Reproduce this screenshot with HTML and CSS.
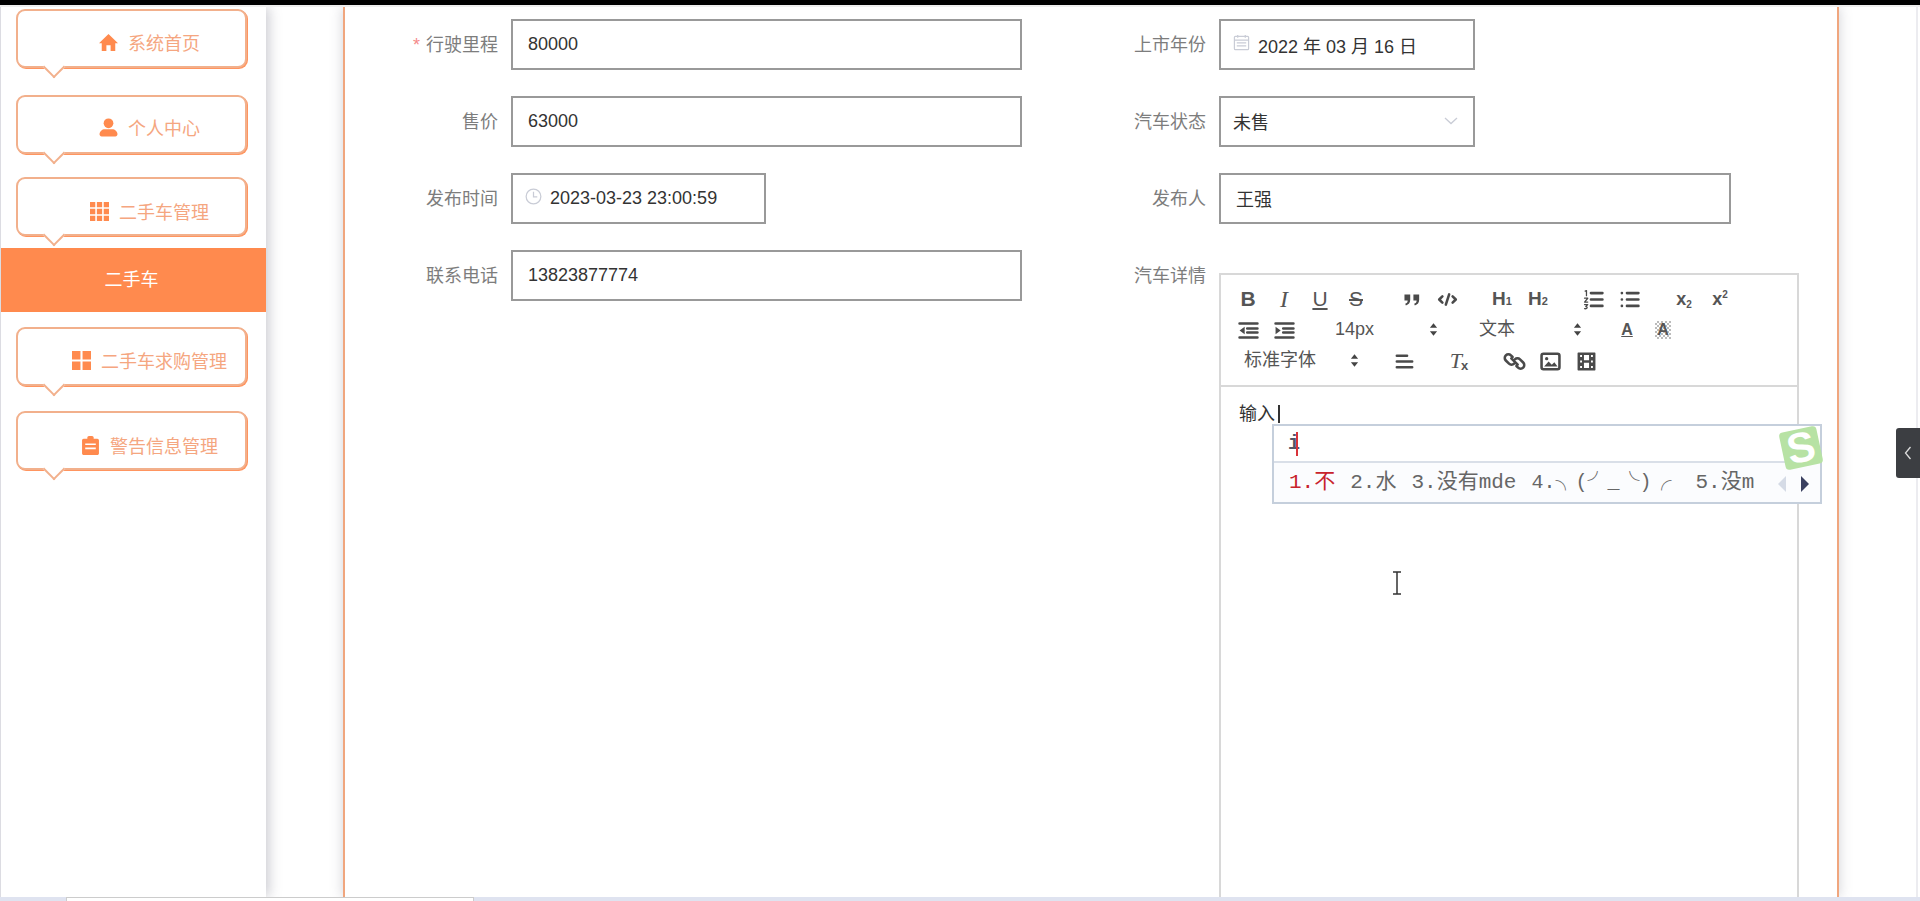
FILE: index.html
```html
<!DOCTYPE html>
<html lang="zh-CN">
<head>
<meta charset="UTF-8">
<meta name="viewport" content="width=device-width, initial-scale=1.0">
<title>二手车</title>
<link rel="stylesheet" href="styles.css">
</head>
<body>
<div class="topbar"></div>
<div class="page">
    <div class="sidebar">
        <a class="nav-card nav-home">
            <svg class="nav-icon" viewBox="0 0 18 18"><path d="M9 1 18 9.6h-2.6V17H11v-5.4H7V17H2.6V9.6H0z"/></svg>
            <span>系统首页</span>
        </a>
        <a class="nav-card nav-user">
            <svg class="nav-icon" viewBox="0 0 18 18"><circle cx="9" cy="5" r="4.6"/><path d="M0.5 15.5C0.5 12.5 3 10.6 5.5 10.6h7c2.5 0 5 1.9 5 4.9 0 1.2-.8 2-2 2h-13c-1.2 0-2-.8-2-2z"/></svg>
            <span>个人中心</span>
        </a>
        <a class="nav-card nav-cars">
            <svg class="nav-icon" viewBox="0 0 18 18"><path d="M0 0h5v5H0zM6.5 0h5v5h-5zM13 0h5v5h-5zM0 6.5h5v5H0zM6.5 6.5h5v5h-5zM13 6.5h5v5h-5zM0 13h5v5H0zM6.5 13h5v5h-5zM13 13h5v5h-5z"/></svg>
            <span>二手车管理</span>
        </a>
        <a class="nav-active">二手车</a>
        <a class="nav-card nav-wanted">
            <svg class="nav-icon" viewBox="0 0 18 18"><path d="M0 0h8v8H0zM10 0h8v8h-8zM0 10h8v8H0zM10 10h8v8h-8z"/></svg>
            <span>二手车求购管理</span>
        </a>
        <a class="nav-card nav-alert">
            <svg class="nav-icon" viewBox="0 0 18 18"><path fill-rule="evenodd" d="M2.5 2.5H6V1.5C6 .7 6.7 0 7.5 0h3c.8 0 1.5.7 1.5 1.5v1h3.5c.8 0 1.5.7 1.5 1.5v12.500c0 .8-.7 1.500-1.500 1.500h-13C1.700 18 1 17.300 1 16.500V4c0-.8.700-1.500 1.500-1.500zM4 7v1.600h10V7zM4 11v1.600h10V11z"/></svg>
            <span>警告信息管理</span>
        </a>
    </div>

    <div class="main">
        <div class="panel">
            <div class="form-col form-col-l">
                <div class="form-row">
                    <label class="form-label"><span class="required">*</span>行驶里程</label>
                    <input class="field field-full" type="text" value="80000">
                </div>
                <div class="form-row">
                    <label class="form-label">售价</label>
                    <input class="field field-full" type="text" value="63000">
                </div>
                <div class="form-row">
                    <label class="form-label">发布时间</label>
                    <div class="field field-date field-time">
                        <svg class="field-icon" viewBox="0 0 18 18"><circle cx="9" cy="9" r="7.800"/><path d="M9 4v5.300h4"/></svg>
                        <span>2023-03-23 23:00:59</span>
                    </div>
                </div>
                <div class="form-row">
                    <label class="form-label">联系电话</label>
                    <input class="field field-full" type="text" value="13823877774">
                </div>
            </div>

            <div class="form-col form-col-r">
                <div class="form-row">
                    <label class="form-label">上市年份</label>
                    <div class="field field-date">
                        <svg class="field-icon" viewBox="0 0 18 18"><rect x="1.500" y="2.500" width="15" height="14" rx="1"/><path d="M1.500 6.500h15M5 1v3M13 1v3M4 9.500h10M4 12.500h10"/></svg>
                        <span>2022 年 03 月 16 日</span>
                    </div>
                </div>
                <div class="form-row">
                    <label class="form-label">汽车状态</label>
                    <div class="field field-select">
                        <span>未售</span>
                        <svg class="select-arrow" viewBox="0 0 14 8"><path d="M1 1l6 5.500L13 1"/></svg>
                    </div>
                </div>
                <div class="form-row">
                    <label class="form-label">发布人</label>
                    <input class="field field-person" type="text" value="王强">
                </div>
                <div class="form-row form-row-editor">
                    <label class="form-label">汽车详情</label>
                    <div class="editor">
                        <div class="toolbar">
                            <div class="tool-row">
                                <div class="tool-group">
                                    <span class="tool tool-b">B</span>
                                    <span class="tool tool-i">I</span>
                                    <span class="tool tool-u">U</span>
                                    <span class="tool tool-s">S</span>
                                </div>
                                <div class="tool-group">
                                    <span class="tool"><svg class="tool-svg" viewBox="0 0 18 18"><path class="solid" d="M3.500 5h4.500v4.200C8 11.500 6.800 13 4.600 13.600l-.5-1.200C5.300 12 6 11.200 6 9.800H3.500zM10.500 5H15v4.200c0 2.300-1.200 3.800-3.400 4.400l-.5-1.200c1.200-.4 1.900-1.200 1.900-2.600h-2.500z"/></svg></span>
                                    <span class="tool"><svg class="tool-svg" viewBox="0 0 18 18"><path d="M5 6.500 2.500 9 5 11.500M13 6.500 15.500 9 13 11.500M10.300 5 7.700 13"/></svg></span>
                                </div>
                                <div class="tool-group">
                                    <span class="tool tool-h">H<sub>1</sub></span>
                                    <span class="tool tool-h">H<sub>2</sub></span>
                                </div>
                                <div class="tool-group">
                                    <span class="tool"><svg class="tool-svg" viewBox="0 0 18 18"><path d="M7 4h9M7 9h9M7 14h9"/><path class="thin" d="M2.500 2.500 3.500 2v4M2 8h2.500L2 11h2.500M2 13h2.500L3 14.500c1.500 0 1.500 2-1 1.700"/></svg></span>
                                    <span class="tool"><svg class="tool-svg" viewBox="0 0 18 18"><path d="M7 4h9M7 9h9M7 14h9M3 4h.1M3 9h.1M3 14h.1"/></svg></span>
                                </div>
                                <div class="tool-group">
                                    <span class="tool tool-script">x<sub>2</sub></span>
                                    <span class="tool tool-script">x<sup>2</sup></span>
                                </div>
                            </div>
                            <div class="tool-row">
                                <div class="tool-group">
                                    <span class="tool"><svg class="tool-svg" viewBox="0 0 18 18"><path d="M2 3.500h14M8 7.500h8M8 10.500h8M2 14.500h14"/><path class="solid" d="M6 6v6L2 9z"/></svg></span>
                                    <span class="tool"><svg class="tool-svg" viewBox="0 0 18 18"><path d="M2 3.500h14M8 7.500h8M8 10.500h8M2 14.500h14"/><path class="solid" d="M2 6v6l4-3z"/></svg></span>
                                </div>
                                <div class="tool-group">
                                    <div class="picker">14px<svg class="picker-arrow" viewBox="0 0 10 16"><path d="M5 1l4 5H1zM5 15 1 10h8z"/></svg></div>
                                </div>
                                <div class="tool-group">
                                    <div class="picker">文本<svg class="picker-arrow" viewBox="0 0 10 16"><path d="M5 1l4 5H1zM5 15 1 10h8z"/></svg></div>
                                </div>
                                <div class="tool-group">
                                    <span class="tool tool-color">A</span>
                                    <span class="tool tool-bg">A</span>
                                </div>
                            </div>
                            <div class="tool-row">
                                <div class="tool-group">
                                    <div class="picker picker-font">标准字体<svg class="picker-arrow" viewBox="0 0 10 16"><path d="M5 1l4 5H1zM5 15 1 10h8z"/></svg></div>
                                </div>
                                <div class="tool-group">
                                    <span class="tool"><svg class="tool-svg" viewBox="0 0 18 18"><path d="M3 4.500h8M3 9h12M3 13.500h12"/></svg></span>
                                </div>
                                <div class="tool-group">
                                    <span class="tool tool-clean">T<sub>x</sub></span>
                                </div>
                                <div class="tool-group">
                                    <span class="tool"><svg class="tool-svg" viewBox="0 0 18 18"><path d="M7.500 5.500 6.200 4.200a2.800 2.800 0 0 0-4 4L4.700 10.700a2.800 2.800 0 0 0 4 0M10.500 12.500l1.300 1.300a2.800 2.800 0 0 0 4-4L13.300 7.300a2.800 2.800 0 0 0-4 0M6.500 6.500l5 5"/></svg></span>
                                    <span class="tool"><svg class="tool-svg" viewBox="0 0 18 18"><rect x="2" y="3" width="14" height="12" rx="1.500"/><path class="solid" d="M4 13l3.500-4 2.500 2.500 2-2L14.500 13z"/><circle class="solid" cx="6" cy="6.800" r="1.300"/></svg></span>
                                    <span class="tool"><svg class="tool-svg" viewBox="0 0 18 18"><path class="solid" fill-rule="evenodd" d="M2.500 2h13c.3 0 .5.200.5.500v13c0 .3-.2.500-.5.500h-13c-.3 0-.5-.2-.5-.5v-13c0-.3.200-.5.500-.5zM4 4v1.500h1.500V4zM4 8.200v1.500h1.500V8.200zM4 12.500V14h1.500v-1.500zM12.500 4v1.500H14V4zM12.500 8.200v1.500H14V8.200zM12.500 12.500V14H14v-1.500zM7 4v4h4V4zM7 10v4h4v-4z"/></svg></span>
                                </div>
                            </div>
                        </div>
                        <div class="editor-body">
                            <span>输入</span><span class="caret"></span>
                            <div class="ime">
                                <div class="ime-input"><span class="ime-letter">i</span><span class="ime-caret"></span></div>
                                <div class="ime-list">
                                    <span class="ime-first">1.不</span>
                                    <span>2.水</span>
                                    <span>3.没有mde</span>
                                    <span class="ime-face">4.╮(╯_╰)╭</span>
                                    <span>5.没m</span>
                                </div>
                                <div class="ime-logo"><span>S</span></div>
                                <span class="ime-prev"></span>
                                <span class="ime-next"></span>
                            </div>
                            <svg class="ibeam" viewBox="0 0 10 24"><path d="M1 1h8M5 1v22M1 23h8"/></svg>
                        </div>
                    </div>
                </div>
            </div>
        </div>
    </div>
</div>
<div class="bottom-strip"><div class="bottom-tab"></div></div>
<div class="side-handle"><svg viewBox="0 0 8 14"><path d="M6.500 1 1.500 7l5 6"/></svg></div>
</body>
</html>
```

FILE: styles.css
```css
* {
    box-sizing: border-box;
}

body {
    margin: 0;
    height: 100vh;
    overflow: hidden;
    display: flex;
    flex-direction: column;
    background-color: #fff;
    font-family: "Liberation Sans", "Noto Sans CJK SC", sans-serif;
    font-size: 18px;
    color: #333;
}

.topbar {
    height: 7px;
    background-color: #000;
    border-bottom: 2px solid #eee;
}

.page {
    flex: 1;
    min-height: 0;
    display: flex;
    overflow: hidden;
}

/* sidebar */
.sidebar {
    position: relative;
    z-index: 1;
    width: 266px;
    flex-shrink: 0;
    padding-top: 2px;
    background-color: #fff;
    border-left: 1px solid #dcdce2;
    box-shadow: 3px 0 12px rgba(70, 70, 90, 0.28);
}

.nav-card {
    position: relative;
    display: flex;
    align-items: center;
    justify-content: center;
    gap: 10px;
    width: 231px;
    height: 59px;
    margin-left: 15px;
    padding: 7px 0 0 36px;
    background-color: #fff;
    border: 2px solid #f2b08c;
    border-radius: 9px;
    box-shadow: 1px 1px 0 #ff9560;
    color: #f5a680;
}

.nav-card::after {
    content: "";
    position: absolute;
    left: 28px;
    bottom: -9px;
    width: 14px;
    height: 14px;
    background-color: #fff;
    border-right: 2px solid #f2b08c;
    border-bottom: 2px solid #f2b08c;
    transform: rotate(45deg);
}

.nav-user {
    margin-top: 27px;
    padding-top: 5px;
}

.nav-cars {
    margin-top: 23px;
    padding-top: 9px;
}

.nav-active {
    display: block;
    height: 64px;
    margin-top: 12px;
    padding-right: 4px;
    background-color: #ff8a4e;
    color: #fff;
    line-height: 64px;
    text-align: center;
}

.nav-wanted {
    margin-top: 15px;
}

.nav-alert {
    margin-top: 25px;
    padding-top: 9px;
}

.nav-icon {
    width: 19px;
    height: 19px;
    flex-shrink: 0;
    fill: #ff8a4e;
}

/* main panel */
.main {
    flex: 1;
    min-width: 0;
    margin-right: 2px;
    padding: 0 77px;
    border-right: 2px solid #ececf0;
}

.panel {
    height: 100%;
    display: flex;
    padding: 12px 0 0 15px;
    background-color: #fff;
    border-left: 2px solid #f0a67e;
    border-right: 2px solid #f0a67e;
    box-shadow: 0 0 12px rgba(70, 70, 90, 0.25);
}

.form-col {
    display: flex;
    flex-direction: column;
    gap: 26px;
}

.form-col-l {
    width: 662px;
    margin-right: 46px;
}

.form-col-r {
    flex: 1;
}

.form-row {
    display: flex;
    height: 51px;
}

.form-row-editor {
    flex: 1;
    min-height: 0;
}

.form-label {
    width: 138px;
    margin-right: 13px;
    flex-shrink: 0;
    color: #7d7d7d;
    line-height: 53px;
    text-align: right;
}

.required {
    margin-right: 6px;
    color: #f58a8a;
}

.field {
    height: 51px;
    padding: 0 15px;
    background-color: #fff;
    border: 2px solid #999;
    font: inherit;
    color: #333;
    outline: none;
}

.field-full {
    flex: 1;
}

.field-date {
    display: flex;
    align-items: center;
    gap: 8px;
    width: 256px;
    padding-left: 12px;
}

.field-time {
    width: 255px;
}

.field-select {
    display: flex;
    align-items: center;
    justify-content: space-between;
    width: 256px;
    padding: 0 15px 2px 12px;
}

.field-person {
    width: 512px;
    padding-bottom: 2px;
}

.field-icon {
    width: 17px;
    height: 17px;
    margin-top: -4px;
    fill: none;
    stroke: #c9ccd6;
    stroke-width: 1.300;
}

.select-arrow {
    width: 14px;
    height: 8px;
    fill: none;
    stroke: #c9ccd6;
    stroke-width: 1.300;
}

/* editor */
.editor {
    width: 580px;
    margin-top: 23px;
    border: 2px solid #d8d8d8;
    border-bottom: none;
}

.toolbar {
    display: flex;
    flex-direction: column;
    gap: 1px;
    padding: 9px 0 9px 9px;
    border-bottom: 2px solid #d8d8d8;
}

.tool-row {
    display: flex;
    height: 30px;
}

.tool-group {
    display: flex;
    margin-right: 19px;
}

.tool {
    display: flex;
    align-items: center;
    justify-content: center;
    width: 36px;
    height: 30px;
    color: #555;
}

.tool-svg {
    width: 23px;
    height: 23px;
    fill: none;
    stroke: #4a4a4a;
    stroke-width: 2;
    stroke-linecap: round;
    stroke-linejoin: round;
}

.tool-svg .solid {
    fill: #4a4a4a;
    stroke: none;
}

.tool-svg .thin {
    stroke-width: 1;
}

.tool-b {
    font-size: 21px;
    font-weight: bold;
}

.tool-i {
    font-family: "Liberation Serif", serif;
    font-size: 24px;
    font-style: italic;
}

.tool-u {
    font-size: 21px;
    text-decoration: underline;
}

.tool-s {
    font-size: 21px;
    text-decoration: line-through;
}

/* these hold a sub or sup, so they can't be flex */
.tool-h,
.tool-script,
.tool-clean {
    display: block;
    line-height: 30px;
    text-align: center;
}

.tool-h {
    font-size: 19px;
    font-weight: bold;
}

.tool-h sub {
    font-size: 11px;
    line-height: 0;
    vertical-align: 0;
}

.tool-script {
    font-size: 18px;
    font-weight: bold;
}

.tool-script sub,
.tool-script sup {
    font-size: 10px;
    line-height: 0;
}

.tool-script sub {
    vertical-align: -3px;
}

.tool-script sup {
    vertical-align: 7px;
}

.tool-color {
    font-size: 16px;
    font-weight: bold;
    text-decoration: underline;
}

.tool-bg {
    padding: 6px 10px;
    font-size: 16px;
    font-weight: bold;
    background: repeating-conic-gradient(#bbb 0 25%, #fff 0 50%) 0 0 / 4px 4px content-box;
}

.tool-clean {
    font-family: "Liberation Serif", serif;
    font-size: 22px;
    font-style: italic;
}

.tool-clean sub {
    margin-left: -1px;
    font-family: "Liberation Sans", sans-serif;
    font-size: 13px;
    font-style: normal;
    font-weight: bold;
    line-height: 0;
    vertical-align: -2px;
}

.picker {
    position: relative;
    width: 125px;
    padding-left: 14px;
    color: #555;
    line-height: 29px;
}

.picker-font {
    width: 137px;
}

.picker-arrow {
    position: absolute;
    top: 7px;
    right: 8px;
    width: 9px;
    height: 15px;
    fill: #444;
}

.editor-body {
    position: relative;
    padding: 15px 18px;
    line-height: 24px;
    color: #333;
}

.caret {
    display: inline-block;
    width: 2px;
    height: 18px;
    margin-left: 3px;
    vertical-align: -3px;
    background-color: #333;
}

/* input method popup */
.ime {
    position: absolute;
    top: 37px;
    left: 51px;
    z-index: 2;
    width: 550px;
    height: 80px;
    background-color: #fff;
    border: 2px solid #c5cfdc;
}

.ime-input {
    display: flex;
    align-items: center;
    height: 37px;
    padding-left: 14px;
    border-bottom: 2px solid #d9dfe8;
    font-family: "Liberation Mono", monospace;
    font-size: 20px;
    font-weight: bold;
    color: #556;
}

.ime-caret {
    width: 2px;
    height: 24px;
    margin-left: -4px;
    background-color: #d9333a;
}

.ime-list {
    display: flex;
    align-items: center;
    gap: 15px;
    height: 39px;
    padding-left: 15px;
    background-color: #fbfcfe;
    font-family: "Liberation Mono", "Noto Sans CJK SC", monospace;
    font-size: 21px;
    color: #666;
    white-space: nowrap;
}

.ime-first {
    color: #c8232c;
}

.ime-face {
    width: 149px;
    font-size: 20px;
    overflow: hidden;
}

.ime-logo {
    position: absolute;
    top: 0;
    right: 0;
    width: 38px;
    height: 38px;
    margin-top: 3px;
    background-color: #b7e2a4;
    border-radius: 4px;
    color: #fff;
    font-size: 42px;
    font-weight: bold;
    line-height: 38px;
    text-align: center;
    transform: rotate(-12deg);
}

.ime-prev,
.ime-next {
    position: absolute;
    top: 50px;
    width: 0;
    height: 0;
    border-top: 8px solid transparent;
    border-bottom: 8px solid transparent;
}

.ime-prev {
    right: 34px;
    border-right: 8px solid #d5dbe6;
}

.ime-next {
    right: 11px;
    border-left: 8px solid #3a4060;
}

.ibeam {
    position: absolute;
    top: 184px;
    left: 171px;
    width: 10px;
    height: 24px;
    fill: none;
    stroke: #333;
    stroke-width: 1.500;
}

/* bottom of the window */
.bottom-strip {
    height: 4px;
    padding-left: 66px;
    background-color: #dfe3f0;
}

.bottom-tab {
    width: 408px;
    height: 4px;
    background-color: #fff;
    border: 1px solid #ccc;
    border-bottom: none;
}

.side-handle {
    position: absolute;
    top: 428px;
    right: 0;
    display: flex;
    align-items: center;
    justify-content: center;
    width: 24px;
    height: 50px;
    background-color: #3c3e42;
    border-radius: 3px 0 0 3px;
}

.side-handle svg {
    width: 8px;
    height: 14px;
    fill: none;
    stroke: #ddd;
    stroke-width: 1.300;
}
```
